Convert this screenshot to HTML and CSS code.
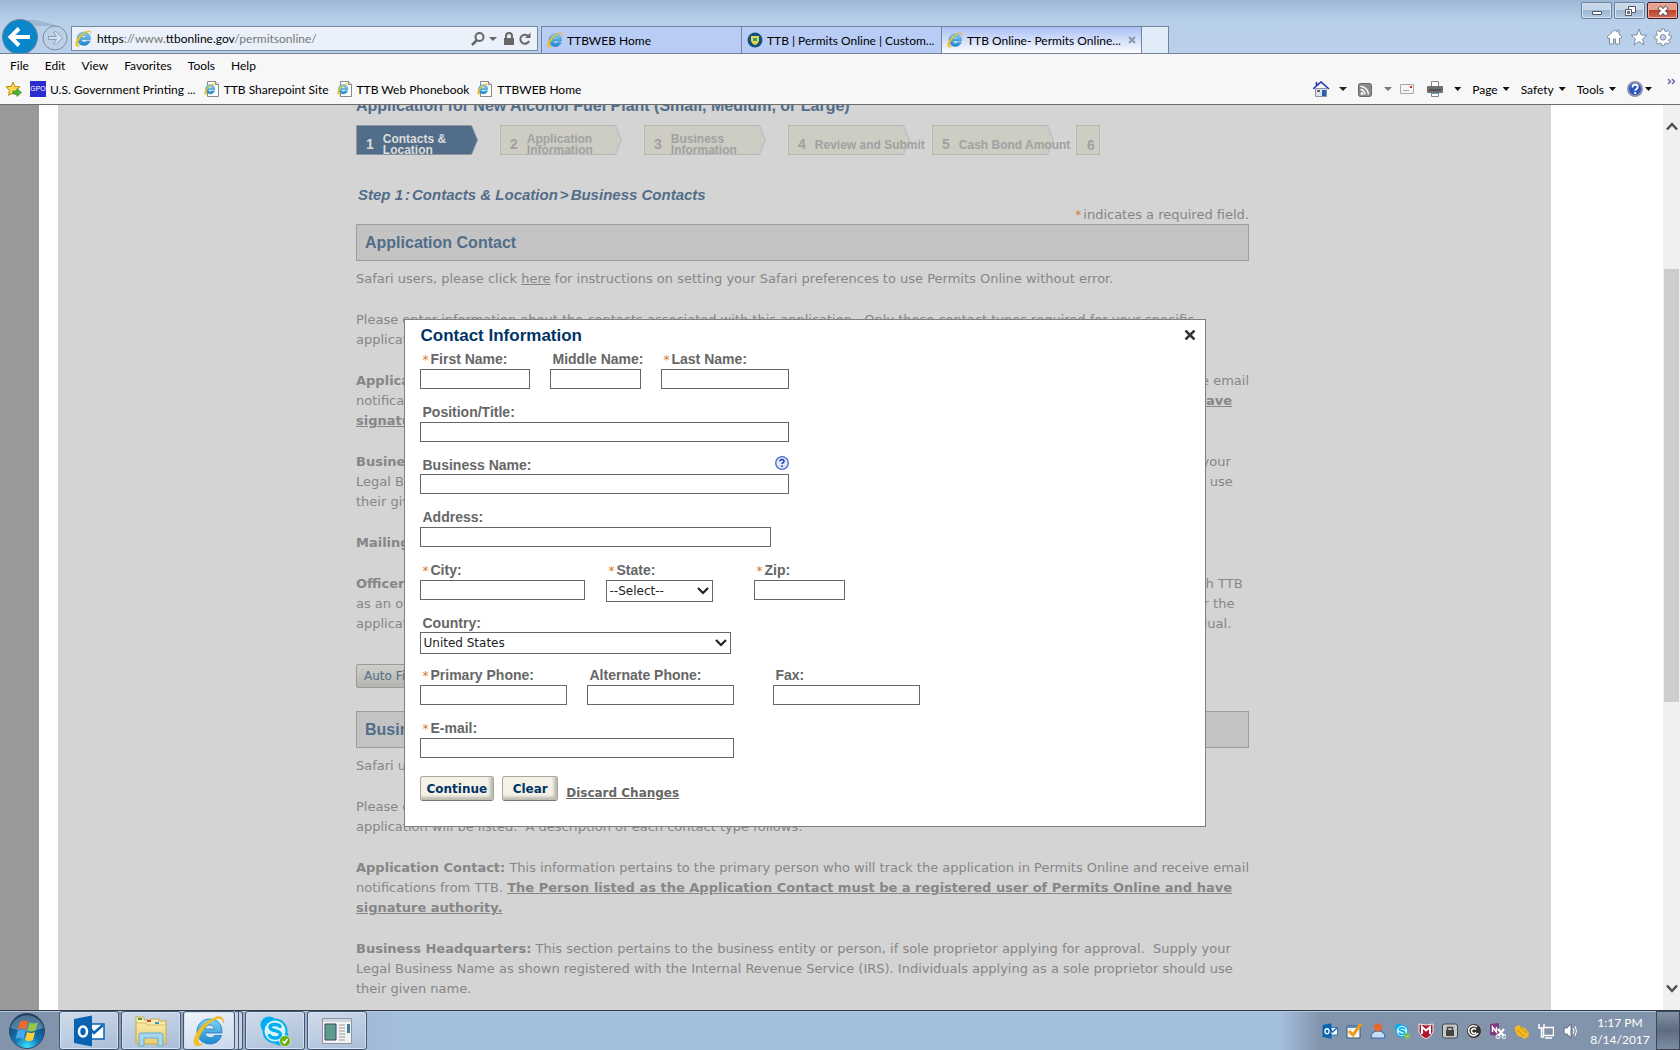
FILE: index.html
```html
<!DOCTYPE html>
<html lang="en">
<head>
<meta charset="utf-8">
<title>TTB Online- Permits Online</title>
<link rel="stylesheet" href="styles.css">
</head>
<body>
<svg class="defs" aria-hidden="true">
  <defs>
    <linearGradient id="ieBlue" x1="0" y1="0" x2="0" y2="1"><stop offset="0" stop-color="#7fd6f7"/><stop offset="1" stop-color="#1b86cf"/></linearGradient>
    <radialGradient id="orb" cx=".5" cy=".95" r=".9"><stop offset="0" stop-color="#3fe0ff"/><stop offset=".4" stop-color="#1276b5"/><stop offset="1" stop-color="#12395f"/></radialGradient>
    <linearGradient id="folder" x1="0" y1="0" x2="0" y2="1"><stop offset="0" stop-color="#fdf3b8"/><stop offset="1" stop-color="#e8cd6c"/></linearGradient>
  </defs>
  <symbol id="ie" viewBox="0 0 32 32">
    <path d="M16.500 4C9.500 4 4 9.500 4 16.500S9.500 29 17 29c5.500 0 10-3.500 11.500-8.500h-7c-.8 1.500-2.200 2.200-4.300 2.200-3 0-5-1.900-5.200-4.700H29C29.500 9.500 24.500 4 16.500 4zM12 14c.4-2.500 2.400-4 4.800-4s4.300 1.500 4.600 4z" fill="url(#ieBlue)" stroke="#1878bd" stroke-width=".8"/>
    <path d="M30.500 8C31.500 2 27 0 21 3 11 7 2 17 1 26c-.6 5 4 6 9 3-3.500.5-5.500-1-4.500-5C8 16 15 7.500 22.500 4.500c4.500-2 7.500-1 8 3.500z" fill="#f5c220" stroke="#d9a312" stroke-width=".4"/>
  </symbol>
  <symbol id="iepage" viewBox="0 0 16 16">
    <path d="M3.500.5h8l3 3v12h-11z" fill="#fff" stroke="#888"/><path d="M11.500.5v3h3" fill="#ddd" stroke="#888"/>
    <use href="#ie" x="0" y="2" width="12" height="12"/>
  </symbol>
  <symbol id="skype" viewBox="0 0 32 32">
    <circle cx="10" cy="10" r="8.500" fill="#00aff0"/><circle cx="21" cy="22" r="8.500" fill="#00aff0"/><circle cx="16" cy="16" r="12.500" fill="#00aff0"/>
    <circle cx="16" cy="16" r="10.500" fill="#fff" opacity=".85"/>
    <path d="M21 11.500C19.500 9 11 8.500 11 12.300c0 4.400 10.500 2.400 10.500 7.200 0 4.500-9 4.500-11 1" fill="none" stroke="#00aff0" stroke-width="3.400" stroke-linecap="round"/>
    <circle cx="26" cy="26" r="5.500" fill="#6bb012" stroke="#fff" stroke-width=".6"/><path d="M23.500 26l2 2 3-4" fill="none" stroke="#fff" stroke-width="1.500"/>
  </symbol>
  <symbol id="outlook" viewBox="0 0 32 32">
    <path d="M15 9h16v15H15z" fill="#fff" stroke="#0a63b0" stroke-width="1.500"/><path d="M16 12l5 6 9-8" fill="none" stroke="#0a63b0" stroke-width="2.500"/>
    <path d="M1 4l18-3.500v31L1 28z" fill="#0a63b0"/><ellipse cx="10" cy="16.500" rx="4" ry="5" fill="none" stroke="#fff" stroke-width="2.600"/>
  </symbol>
</svg>

<div class="browser">
  <header class="chrome">
    <div class="titlebar">
      <div class="winbtns">
        <button class="winbtn" aria-label="Minimize"><svg width="12" height="12"><path d="M1.500 6.500h9v3h-9z" fill="#fff" stroke="#556"/></svg></button>
        <button class="winbtn" aria-label="Restore"><svg width="12" height="12"><path d="M4.500 1.500h7v6h-7z" fill="#fff" stroke="#556"/><path d="M1.500 4.500h6v6h-6z" fill="#fff" stroke="#556"/><path d="M3.500 6.500h2v2h-2z" fill="#aac" stroke="#556"/></svg></button>
        <button class="winbtn winclose" aria-label="Close"><svg width="12" height="12"><path d="M2 2l8 8M10 2l-8 8" stroke="#645058" stroke-width="4.500"/><path d="M2.500 2.500l7 7M9.500 2.500l-7 7" stroke="#fff" stroke-width="2.500"/></svg></button>
      </div>
    </div>
    <div class="navrow">
      <svg class="backfwd" width="71" height="36" viewBox="0 0 71 36">
        <path d="M22 2h14c8 2 16 4 22 6H36z" fill="#9eb6d2"/>
        <circle cx="20" cy="19" r="17.500" fill="#0a86cb" stroke="#6f8297"/>
        <path d="M11 19h19M19 10.500L10.500 19l8.500 8.500" fill="none" stroke="#fff" stroke-width="4"/>
        <circle cx="55" cy="20" r="12" fill="#bcd0e8" stroke="#7b8da5"/>
        <path d="M48.500 18.500h8l-3-4 2.500-1 6.500 6.500-6.500 6.500-2.500-1 3-4h-8z" fill="#d5e2f2" stroke="#8a9bb3"/>
      </svg>
      <div class="address">
        <svg width="17" height="17"><use href="#ie"/></svg>
        <span class="url"><b>https</b>://www.<b>ttbonline.gov</b>/permitsonline/</span>
        <svg width="62" height="16" viewBox="0 0 62 16">
          <circle cx="9.500" cy="6" r="4" fill="none" stroke="#666" stroke-width="2"/><path d="M7 9l-5 5" stroke="#666" stroke-width="2.500"/>
          <path d="M19 6h8l-4 4z" fill="#666"/><path d="M34 7h10v7H34z" fill="#666"/><path d="M36 8V5a3 3 0 0 1 6 0v3" fill="none" stroke="#666" stroke-width="2"/>
          <path d="M58 5a4.500 4.500 0 1 0 1 5" fill="none" stroke="#666" stroke-width="2"/><path d="M55 7h5.500V1.500z" fill="#666"/>
        </svg>
      </div>
      <nav class="tabs">
        <a class="tab" href="#"><svg width="16" height="16"><use href="#ie"/></svg><span>TTBWEB Home</span></a>
        <a class="tab" href="#"><svg width="16" height="16" viewBox="0 0 16 16"><circle cx="8" cy="8" r="7.500" fill="#12507f"/><path d="M4 4h8v5q-1 3-4 4-3-1-4-4z" fill="#e6d84b"/><path d="M6 6h4v3H6z" fill="#3c9b7a"/></svg><span>TTB | Permits Online | Custom...</span></a>
        <a class="tab tab-on" href="#"><svg width="16" height="16"><use href="#ie"/></svg><span>TTB Online- Permits Online...</span><svg width="8" height="8"><path d="M1 1l6 6M7 1L1 7" stroke="#8e96a8" stroke-width="2"/></svg></a>
        <button class="newtab" aria-label="New tab"></button>
      </nav>
      <svg class="tools" width="66" height="18" viewBox="0 0 66 18" fill="#fff" stroke="#7d8da3">
        <path d="M1 9l7.500-7 2.500 2V2h2v4l3 3-1 1.500-1.500-.5v6h-4v-5h-2v5h-4v-6l-1.500.5z"/>
        <path d="M33 1l2.200 6 5.800.2-4.500 3.800 1.500 6-5-3.500-5 3.500 1.500-6L25 7.200l5.800-.2z"/>
        <path d="M55.700 1h2.600l.5 2.100 1.300.6 1.900-1.200 1.800 1.800-1.200 1.900.6 1.300 2.100.5v2.600l-2.100.5-.6 1.300 1.200 1.900-1.800 1.800-1.900-1.200-1.300.6-.5 2.100h-2.600l-.5-2.100-1.300-.6-1.900 1.200-1.800-1.800 1.200-1.900-.6-1.300-2.100-.5V8l2.100-.5.6-1.300-1.200-1.900L52 2.500l1.900 1.200 1.300-.6z"/><circle cx="57" cy="9.300" r="2.800" fill="#bcd0e8"/>
      </svg>
    </div>
    <nav class="menubar"><a href="#">File</a><a href="#">Edit</a><a href="#">View</a><a href="#">Favorites</a><a href="#">Tools</a><a href="#">Help</a></nav>
    <div class="favbar">
      <div class="favs">
        <svg width="16" height="16" viewBox="0 0 16 16"><path d="M7 1l2 4.500 5 .3-3.500 3.500 1 5L7 12l-4.500 2.300 1-5L0 5.800l5-.3z" fill="#f9d94a" stroke="#b98a1d"/><path d="M7 10h4V7.500l4.500 4-4.500 4V13H7z" fill="#4cb83c" stroke="#2a7e22" stroke-width=".6"/></svg>
        <a href="#"><span class="gpo">GPO</span>U.S. Government Printing ...</a>
        <a href="#"><svg width="16" height="16"><use href="#iepage"/></svg>TTB Sharepoint Site</a>
        <a href="#"><svg width="16" height="16"><use href="#iepage"/></svg>TTB Web Phonebook</a>
        <a href="#"><svg width="16" height="16"><use href="#iepage"/></svg>TTBWEB Home</a>
      </div>
      <div class="cmds">
        <svg width="130" height="16" viewBox="0 0 130 16">
          <path d="M2.500 7.500h11v8h-11z" fill="#dbe4ef" stroke="#8a96a8"/><path d="M3.500 1v4M0 8l8-7 8 7" fill="none" stroke="#2433b8" stroke-width="1.600"/><path d="M9 9h4v6H9z" fill="#2a5fb0"/><path d="M4 9h3v2H4z" fill="#667"/>
          <path d="M26 6h8l-4 4z" fill="#222"/>
          <rect x="45.500" y="2.500" width="13" height="13" rx="2" fill="#8a8a8a" stroke="#666"/><circle cx="49" cy="12.500" r="1.500" fill="#fff"/><path d="M47.500 8.500q4 .5 4.500 5M47.500 5.200q7 .8 8 8.300" fill="none" stroke="#fff" stroke-width="1.500"/>
          <path d="M71 6h8l-4 4z" fill="#777"/>
          <path d="M87.500 3.500h13v9h-13z" fill="#f5f5f5" stroke="#aaa"/><path d="M97 5h2v2h-2z" fill="#d22"/><path d="M90 9.500h6" stroke="#aaa"/>
          <path d="M118.500.5h7v5h-7zM118.500 11.500h7v4h-7z" fill="#fff" stroke="#888"/><path d="M115 5h14q1 0 1 1v5q0 1-1 1h-14q-1 0-1-1V6q0-1 1-1z" fill="#707070"/><path d="M116 9h12" stroke="#333"/><path d="M119 12h6v1h-6z" fill="#4ba3c9"/>
        </svg>
        <i class="tri"></i>
        <button class="cmd">Page<i class="tri"></i></button>
        <button class="cmd">Safety<i class="tri"></i></button>
        <button class="cmd">Tools<i class="tri"></i></button>
        <button class="cmd cmd-help" aria-label="Help"><svg width="16" height="16" viewBox="0 0 16 16"><circle cx="8" cy="8" r="7" fill="#2b57c4" stroke="#8b93a5" stroke-width="2"/><path d="M5.500 6.500q0-3 2.600-3t2.600 2.400q0 1.500-1.500 2.300-1 .6-1 1.600M8.200 11v2" fill="none" stroke="#fff" stroke-width="1.800"/></svg><i class="tri"></i></button>
        <span class="more"><svg width="9" height="7"><path d="M1 1l2.500 2.500L1 6M5 1l2.500 2.500L5 6" fill="none" stroke="#6d6bb5" stroke-width="1.500"/></svg></span>
      </div>
    </div>
  </header>

  <main class="viewport">
    <div class="sheet">
      <div class="column">
        <h1>Application for New Alcohol Fuel Plant (Small, Medium, or Large)</h1>
        <ol class="steps">
          <li class="step step-on"><svg viewBox="0 0 122 30"><path d="M.5.500h115l6 14.500-6 14.500H.5z"/></svg><span class="steptext"><b>1</b><span>Contacts &amp;<br>Location</span></span></li>
          <li class="step"><svg viewBox="0 0 122 30"><path d="M.5.500h115l6 14.500-6 14.500H.5z"/></svg><span class="steptext"><b>2</b><span>Application<br>Information</span></span></li>
          <li class="step"><svg viewBox="0 0 122 30"><path d="M.5.500h115l6 14.500-6 14.500H.5z"/></svg><span class="steptext"><b>3</b><span>Business<br>Information</span></span></li>
          <li class="step step-single"><svg viewBox="0 0 122 30"><path d="M.5.500h115l6 14.500-6 14.500H.5z"/></svg><span class="steptext"><b>4</b><span>Review and Submit</span></span></li>
          <li class="step step-single"><svg viewBox="0 0 122 30"><path d="M.5.500h115l6 14.500-6 14.500H.5z"/></svg><span class="steptext"><b>5</b><span>Cash Bond Amount</span></span></li>
          <li class="step step-last"><span class="steptext"><b>6</b></span></li>
        </ol>
        <h2 class="crumb"><span>Step 1</span><span>:</span><span>Contacts &amp; Location</span><span>&gt;</span><span>Business Contacts</span></h2>
        <p class="required"><span class="star">*</span>indicates a required field.</p>
        <h3 class="bar">Application Contact</h3>
        <div class="copy">
          <p>Safari users, please click <a href="#">here</a> for instructions on setting your Safari preferences to use Permits Online without error.</p>
          <p>Please enter information about the contacts associated with this application.&nbsp; Only those contact types required for your specific<br>application will be listed.&nbsp; A description of each contact type follows:</p>
          <p><b>Application Contact:</b> This information pertains to the primary person who will track the application in Permits Online and receive email<br>notifications from TTB. <b><u>The Person listed as the Application Contact must be a registered user of Permits Online and have<br>signature authority.</u></b></p>
          <p><b>Business Headquarters:</b> This section pertains to the business entity or person, if sole proprietor applying for approval.&nbsp; Supply your<br>Legal Business Name as shown registered with the Internal Revenue Service (IRS). Individuals applying as a sole proprietor should use<br>their given name.</p>
          <p><b>Mailing Address:</b> This section pertains to the mailing address.</p>
          <p><b>Officer/Ownership Information:</b> This section pertains to each such individual or entity who must also be listed or registered with TTB<br>as an officer, owner, member or partner of the business. An entry is required for each such person who has any interest or acts for the<br>application. Add a separate contact for each one, and supply all of the other details that may be asked for about each such individual.</p>
        </div>
        <button class="autofill">Auto Fill with New</button>
        <h3 class="bar">Business Headquarters</h3>
        <div class="copy">
          <p>Safari users, please click <a href="#">here</a> for instructions on setting your Safari preferences to use Permits Online without error.</p>
          <p>Please enter information about the contacts associated with this application.&nbsp; Only those contact types required for your specific<br>application will be listed.&nbsp; A description of each contact type follows:</p>
          <p><b>Application Contact:</b> This information pertains to the primary person who will track the application in Permits Online and receive email<br>notifications from TTB. <b><u>The Person listed as the Application Contact must be a registered user of Permits Online and have<br>signature authority.</u></b></p>
          <p><b>Business Headquarters:</b> This section pertains to the business entity or person, if sole proprietor applying for approval.&nbsp; Supply your<br>Legal Business Name as shown registered with the Internal Revenue Service (IRS). Individuals applying as a sole proprietor should use<br>their given name.</p>
        </div>
      </div>

      <form class="dialog">
        <div class="dialoghead"><h2>Contact Information</h2><button type="button" class="close" aria-label="Close"><svg width="12" height="10"><path d="M1.500.5l9 9M10.500.5l-9 9" stroke="#333" stroke-width="2.500"/></svg></button></div>
        <div class="row">
          <div class="field w110"><label for="fn"><span class="star">*</span>First Name:</label><input id="fn" type="text"></div>
          <div class="field w91"><label for="mn">Middle Name:</label><input id="mn" type="text"></div>
          <div class="field w128"><label for="ln"><span class="star">*</span>Last Name:</label><input id="ln" type="text"></div>
        </div>
        <div class="row"><div class="field w369"><label for="pt">Position/Title:</label><input id="pt" type="text"></div></div>
        <div class="row tight"><div class="field w369"><div class="labelrow"><label for="bn">Business Name:</label><svg width="14" height="14" viewBox="0 0 14 14"><circle cx="7" cy="7" r="6.300" fill="#e2e7f6" stroke="#4a68cf" stroke-width="1.300"/><path d="M5 5.300Q5 3.500 7 3.500t2 1.700q0 1-1 1.500-.9.500-.9 1.400M7 9.200V11" fill="none" stroke="#2444b8" stroke-width="1.600"/></svg></div><input id="bn" type="text"></div></div>
        <div class="row"><div class="field w351"><label for="ad">Address:</label><input id="ad" type="text"></div></div>
        <div class="row cityrow">
          <div class="field w165"><label for="ci"><span class="star">*</span>City:</label><input id="ci" type="text"></div>
          <div class="field w107"><label for="st"><span class="star">*</span>State:</label><span class="pick"><select id="st"><option>--Select--</option></select><svg width="12" height="8"><path d="M1 1l5 5 5-5" fill="none" stroke="#222" stroke-width="2.200"/></svg></span></div>
          <div class="field w91 zip"><label for="zi"><span class="star">*</span>Zip:</label><input id="zi" type="text"></div>
        </div>
        <div class="row tight"><div class="field w311"><label for="co">Country:</label><span class="pick"><select id="co"><option>United States</option></select><svg width="12" height="8"><path d="M1 1l5 5 5-5" fill="none" stroke="#222" stroke-width="2.200"/></svg></span></div></div>
        <div class="row">
          <div class="field w147"><label for="pp"><span class="star">*</span>Primary Phone:</label><input id="pp" type="text"></div>
          <div class="field w147"><label for="ap">Alternate Phone:</label><input id="ap" type="text"></div>
          <div class="field w147 fax"><label for="fx">Fax:</label><input id="fx" type="text"></div>
        </div>
        <div class="row"><div class="field w314"><label for="em"><span class="star">*</span>E-mail:</label><input id="em" type="email"></div></div>
        <div class="actions"><button type="submit">Continue</button><button type="reset">Clear</button><a href="#">Discard Changes</a></div>
      </form>
    </div>
    <div class="scroll" aria-hidden="true">
      <svg width="12" height="9"><path d="M1 7.500L6 2l5 5.500" fill="none" stroke="#505050" stroke-width="2.500"/></svg>
      <div class="track"><div class="thumb"></div></div>
      <svg width="12" height="9"><path d="M1 1.500L6 7l5-5.500" fill="none" stroke="#505050" stroke-width="2.500"/></svg>
    </div>
  </main>

  <footer class="taskbar">
    <button class="start" aria-label="Start"><svg width="38" height="38" viewBox="0 0 38 38"><circle cx="19" cy="19" r="17.500" fill="url(#orb)" stroke="#344c68"/><path d="M2.500 16a17 17 0 0 1 33 0Q19 23 2.500 16z" fill="#c5d5e5" opacity=".35"/><path d="M12 9.500q4-2 8 0l-2 8q-4-2-8 0z" fill="#ee6a2a"/><path d="M21.500 10.500q4 2 8.500 0l-2.500 8q-4 2-8 0z" fill="#96c645"/><path d="M9.500 19q4-2 8 0l-2 8q-4-2-8 0z" fill="#4aa8e8"/><path d="M19 20q4 2 8 0l-2 8q-4 2-8 0z" fill="#fbcf35"/></svg></button>
    <div class="apps">
      <button class="app" aria-label="Outlook"><svg width="32" height="32"><use href="#outlook"/></svg></button>
      <button class="app" aria-label="Explorer"><svg width="34" height="32" viewBox="0 0 34 32"><path d="M2 5V2h8v3h7V4h8v2h7v23H2z" fill="url(#folder)" stroke="#c9a84a"/><path d="M4 3h4v2H4z" fill="#4a9c3c"/><path d="M13 5h4v2h-4z" fill="#d0452c"/><path d="M21 7h4v2h-4z" fill="#3b8fd0"/><path d="M2 8h10l1 2h18" stroke="#d9bc63" fill="none"/><path d="M5 31V20q0-2 2-2h20q2 0 2 2v11h-5v-8H10v8z" fill="#a5d8ef" stroke="#68aacc"/></svg></button>
      <button class="app app-on" aria-label="Internet Explorer"><svg width="32" height="32"><use href="#ie"/></svg></button>
      <i class="stack"></i>
      <button class="app" aria-label="Skype"><svg width="32" height="32"><use href="#skype"/></svg></button>
      <button class="app" aria-label="Document"><svg width="32" height="28" viewBox="0 0 32 28"><path d="M1.500 1.500h29v25h-29z" fill="#f2f2f2" stroke="#8c97a5"/><path d="M2 2h28v3H2z" fill="#cfd6de"/><path d="M4 7h11v16H4z" fill="#5c9c8c" stroke="#446"/><path d="M18 8h6M18 11h6M18 14h6M18 17h6M18 20h6M18 23h6" stroke="#999"/><path d="M26 7h3v9h-3z" fill="#3c7d9c"/></svg></button>
    </div>
    <div class="tray">
      <svg width="16" height="16"><use href="#outlook"/></svg>
      <svg width="16" height="16" viewBox="0 0 16 16"><path d="M1 3h13v12H1z" fill="#f5f5f5" stroke="#357"/><path d="M1 3h13v2H1z" fill="#5b8ec5"/><path d="M3 8l4 4 8-11" fill="none" stroke="#f09a1a" stroke-width="3"/></svg>
      <svg width="16" height="16" viewBox="0 0 16 16"><path d="M1 15q0-7 7-7t7 7z" fill="#c9def2" stroke="#2b6cb5"/><circle cx="8" cy="4.500" r="4" fill="#e8682c"/></svg>
      <svg width="16" height="16"><use href="#skype"/></svg>
      <svg width="16" height="16" viewBox="0 0 16 16"><path d="M1 1q7 2 14 0v8q-2 5-7 7-5-2-7-7z" fill="#b3152c" stroke="#eee"/><path d="M4 11V4l4 3.500L12 4v7" fill="none" stroke="#fff" stroke-width="2"/></svg>
      <svg width="16" height="16" viewBox="0 0 16 16"><rect x=".5" y="1" width="15" height="14" rx="2" fill="#c9c9c9" stroke="#444"/><path d="M4 7h8v6H4z" fill="#444"/><path d="M5.500 7V4.500h5V7" fill="none" stroke="#444" stroke-width="1.500"/></svg>
      <svg width="16" height="16" viewBox="0 0 16 16"><circle cx="8" cy="8" r="7.500" fill="#333" stroke="#999"/><path d="M11 4a5 5 0 1 0 1 6M10 6.500a2.500 2.500 0 1 0 0 3" fill="none" stroke="#fff" stroke-width="1.500"/></svg>
      <svg width="16" height="16" viewBox="0 0 16 16"><path d="M0 1l9-1v13l-9-1z" fill="#80397b"/><path d="M2.500 9V4l4 5V4" fill="none" stroke="#fff" stroke-width="1.500"/><path d="M8 6l6 7M14 6l-6 7" stroke="#fff" stroke-width="2"/><circle cx="8" cy="13.500" r="2" fill="none" stroke="#fff"/><circle cx="14" cy="13.500" r="2" fill="none" stroke="#fff"/></svg>
      <svg width="16" height="16" viewBox="0 0 16 16"><path d="M1 4l4-2 2 2 4 1 4 5-1 4-4 2-2-2-4-1-3-5z" fill="#f5b81e"/><path d="M3 7l7 6M6 4l7 6" stroke="#a8822a" stroke-width=".8"/></svg>
      <svg width="16" height="16" viewBox="0 0 16 16"><path d="M5.500 4.500h10v8h-10zM7 15h7" fill="#7f90a8" stroke="#fff" stroke-width="1.500"/><path d="M1 1v4h5V1M3.500 5v9H6" fill="none" stroke="#fff" stroke-width="1.500"/></svg>
      <svg width="16" height="16" viewBox="0 0 16 16"><path d="M2 5h3l4-4v14l-4-4H2z" fill="#fff" stroke="#5b6b82"/><path d="M11 5q2 3 0 6M13 3q3 5 0 10" fill="none" stroke="#fff"/></svg>
    </div>
    <div class="clock"><span>1:17 PM</span><span>8/14/2017</span></div>
    <i class="peek"></i>
  </footer>
</div>
</body>
</html>
```
FILE: styles.css
```css
* { box-sizing: border-box; }
body { margin: 0; font-family: Lato, "Open Sans", sans-serif; font-size: 12px; color: #000; }
a { color: inherit; text-decoration: none; }
button { font: inherit; color: inherit; margin: 0; padding: 0; border: 0; background: none; }
svg { display: block; flex: none; }
.defs { position: absolute; width: 0; height: 0; }
.browser { height: 100vh; display: grid; grid-template-rows: auto minmax(0, 1fr) auto; }

/* Browser chrome */
.chrome { background: linear-gradient(#9db8d6, #b9d0eb 22px, #b9cfea 53px, #f7f7f7 53px); border-bottom: 1px solid #6d6d6d; }
.titlebar { height: 18px; display: flex; justify-content: flex-end; padding: 2px 2px 0 0; }
.winbtns { display: flex; gap: 2px; }
.winbtn { width: 31px; height: 17px; display: flex; align-items: center; justify-content: center; border: 1px solid #6c819c; border-radius: 2px; background: linear-gradient(#c6d7ea 50%, #9db5d1 50%, #b5cbe5); box-shadow: inset 0 0 0 1px #d5e2f0; }
.winclose { border-color: #4c1a22; background: linear-gradient(#e5a292 50%, #bd4028 50%, #d0705a); box-shadow: inset 0 0 0 1px #eab2a6; }
.navrow { height: 36px; display: flex; align-items: flex-end; border-bottom: 1px solid #73839b; overflow: hidden; }
.backfwd { align-self: flex-start; }
.address { flex: 0 1 467px; height: 25px; margin-bottom: 2px; display: flex; align-items: center; gap: 5px; padding: 0 5px 0 3px; background: #eaf1fb; border: 1px solid #76869c; }
.url { flex: 1; color: #777; white-space: nowrap; }
.url b { font-weight: normal; color: #000; }
.tabs { display: flex; height: 27px; margin-left: 3px; flex: 0 1 628px; border: 1px solid #73839b; border-bottom: 0; }
.tab { flex: 1 1 0; min-width: 0; display: flex; align-items: center; gap: 4px; padding: 0 5px; background: #b9ccf6; border-right: 1px solid #73839b; white-space: nowrap; overflow: hidden; }
.tab span { flex: 1; }
.tab-on { background: linear-gradient(#a9c0f4, #fdfdff); }
.newtab { width: 26px; background: #e1ecf9; }
.tools { margin: 0 8px 7px auto; }
.menubar { height: 22px; display: flex; align-items: center; gap: 16px; padding: 0 10px; }
.favbar { height: 28px; display: flex; justify-content: space-between; padding: 0 4px 2px 6px; }
.favs, .favs a, .cmds, .cmd { display: flex; align-items: center; }
.favs { gap: 8px; }
.favs a { gap: 4px; white-space: nowrap; }
.gpo { width: 16px; height: 16px; background: #2b2bd0; color: #fff; font: 7px/16px "Liberation Sans", Arial, sans-serif; text-align: center; }
.tri { width: 7px; height: 4px; background: #111; clip-path: polygon(0 0, 100% 0, 50% 100%); }
.cmds { gap: 11px; }
.cmd { gap: 5px; }
.cmd-help { gap: 2px; }
.more { align-self: flex-start; padding: 2px 0 0 4px; }

/* Page under the dialog */
.viewport { display: flex; overflow: hidden; background: linear-gradient(90deg, #999 39px, #fff 39px); }
.sheet { position: relative; flex: 1; margin: 0 112px 0 58px; background: #d4d4d4; overflow: hidden; }
.column { max-width: 897px; margin: 0 auto; padding-right: 4px; color: #868686; font: 13px/20px "DejaVu Sans", Verdana, sans-serif; }
.column p { margin: 0; }
h1, h2, h3, label, .steps { font-family: "Liberation Sans", Arial, sans-serif; }
h1 { margin: -9px 0 0; font-size: 16px; line-height: 20px; color: #526d89; }
.steps { list-style: none; margin: 9px 0 0; padding: 0; display: flex; gap: 22px; height: 30px; font-size: 12px; line-height: 11px; font-weight: bold; color: #a1a1a1; white-space: nowrap; }
.step { display: grid; width: 122px; height: 30px; }
.step > * { grid-area: 1 / 1; }
.step svg { width: 122px; height: 30px; fill: #cdcdc4; stroke: #b9b9b6; }
.step-on { color: #dcdcdc; }
.step-on svg { fill: #526d89; stroke: #8c949c; }
.step-last { width: 24px; background: #cdcdc4; border: 1px solid #b9b9b6; }
.steptext { display: flex; gap: 9px; padding: 9px 0 0 10px; height: 30px; overflow-y: clip; }
.steptext b { font-size: 14px; padding-top: 5px; }
.step-single .steptext > span { padding-top: 6px; }
.crumb { display: flex; gap: 2px; margin: 30px 0 0 2px; font-size: 15px; line-height: 20px; font-style: italic; color: #526d89; }
.required { text-align: right; line-height: 19px; }
.star { font: 12px/16px "DejaVu Sans", sans-serif; color: #d87a2c; margin-right: 2px; }
.bar { margin: 0 0 8px; padding: 0 8px; font-size: 16px; line-height: 35px; color: #526d89; background: #c3c3c3; border: 1px solid #9d9d9d; }
.copy { display: grid; gap: 21px; white-space: nowrap; }
.copy a { text-decoration: underline; }
.autofill { display: block; margin: 30px 0 23px; height: 24px; padding: 0 7px; border: 1px solid #999; border-radius: 2px; background: linear-gradient(#cfcfca, #b5b5b0); color: #526d89; font-size: 12px; line-height: 20px; }

/* Dialog */
.dialog { position: absolute; top: 214px; left: 0; right: 0; margin: 0 auto; width: 802px; max-width: 100%; padding: 6px 8px 25px 15px; background: #fff; border: 1px solid #808080; color: #666; }
.dialoghead { display: flex; justify-content: space-between; padding: 0 1px; margin-bottom: 4px; }
.dialoghead h2 { margin: 0; font-size: 17px; line-height: 20px; color: #036; }
.close { height: 17px; display: flex; align-items: center; }
.row { display: flex; gap: 20px; height: 39px; margin-bottom: 14px; }
.row.tight { height: 38px; }
.row.cityrow { gap: 21px; }
.field { display: flex; flex-direction: column; justify-content: space-between; }
.labelrow { display: flex; justify-content: space-between; align-items: flex-start; }
label { padding-left: 3px; font-size: 14px; line-height: 18px; font-weight: bold; white-space: nowrap; height: 18px; }
label .star { line-height: 12px; }
.field input { width: 100%; height: 20px; padding: 0 3px; border: 1px solid #666; border-radius: 0; background: #fff; font: 12px "DejaVu Sans", sans-serif; }
.pick { display: grid; align-items: center; height: 22px; margin-bottom: -2px; flex: none; }
.pick > * { grid-area: 1 / 1; }
.pick svg { justify-self: end; margin-right: 4px; pointer-events: none; }
select { appearance: none; width: 100%; height: 22px; padding: 0 3px; border: 1px solid #666; border-radius: 0; background: #fff; color: #222; font: 12px "DejaVu Sans", Verdana, sans-serif; }
.w91 { width: 91px; } .w107 { width: 107px; } .w110 { width: 110px; } .w128 { width: 128px; }
.w147 { width: 147px; } .w165 { width: 165px; } .w311 { width: 311px; } .w314 { width: 314px; }
.w351 { width: 351px; } .w369 { width: 369px; }
.zip { margin-left: 20px; } .fax { margin-left: 19px; }
.actions { display: flex; gap: 8px; padding-top: 4px; font: bold 12px/16px "DejaVu Sans", Verdana, sans-serif; }
.actions button { min-width: 56px; height: 25px; padding: 0 6px; color: #036; border: 1px solid #aaa69c; border-bottom-color: #777; border-radius: 3px; background: #f4f2e6; box-shadow: inset -3px -3px 3px #bdbab0; }
.actions a { align-self: flex-end; text-decoration: underline; }

/* Scrollbar */
.scroll { width: 17px; display: flex; flex-direction: column; align-items: center; padding: 17px 0; background: #f0f0f0; gap: 7px; }
.track { flex: 1; width: 15px; display: flex; flex-direction: column; padding-top: 131px; }
.thumb { height: 433px; background: #cdcdcd; }

/* Taskbar */
.taskbar { height: 40px; display: flex; align-items: center; border-top: 1px solid #2f3a4a; background: linear-gradient(90deg, #8294ac 58px, #a4bedd 400px, #a4bedd 1280px, #8294ac 1320px); box-shadow: inset 0 1px #b6c5d8; }
.start { margin-left: 8px; width: 38px; }
.apps { display: flex; gap: 2px; height: 39px; margin-left: 13px; }
.app { width: 60px; display: flex; align-items: center; justify-content: center; border: 1px solid #46566e; border-radius: 3px; background: linear-gradient(160deg, #d0dceb, #a9bdd8); box-shadow: inset 0 0 0 1px #d5e0ee; }
.app-on { width: 52px; background: linear-gradient(160deg, #f0f5fb, #c9d7ea); }
.stack { width: 8px; margin-left: -2px; border: solid #46566e; border-width: 1px 1px 1px 0; border-radius: 0 3px 3px 0; background: linear-gradient(90deg, #c3d1e4 3px, #46566e 3px, #46566e 4px, #c3d1e4 4px); }
.tray { display: flex; gap: 8px; margin-left: auto; }
.clock { display: flex; flex-direction: column; align-items: center; width: 72px; margin-left: 6px; color: #fff; line-height: 17px; }
.peek { width: 24px; height: 39px; border: 1px solid #3b4757; background: linear-gradient(#8593a6, #5c6b80 50%, #7d8da3); }
```
